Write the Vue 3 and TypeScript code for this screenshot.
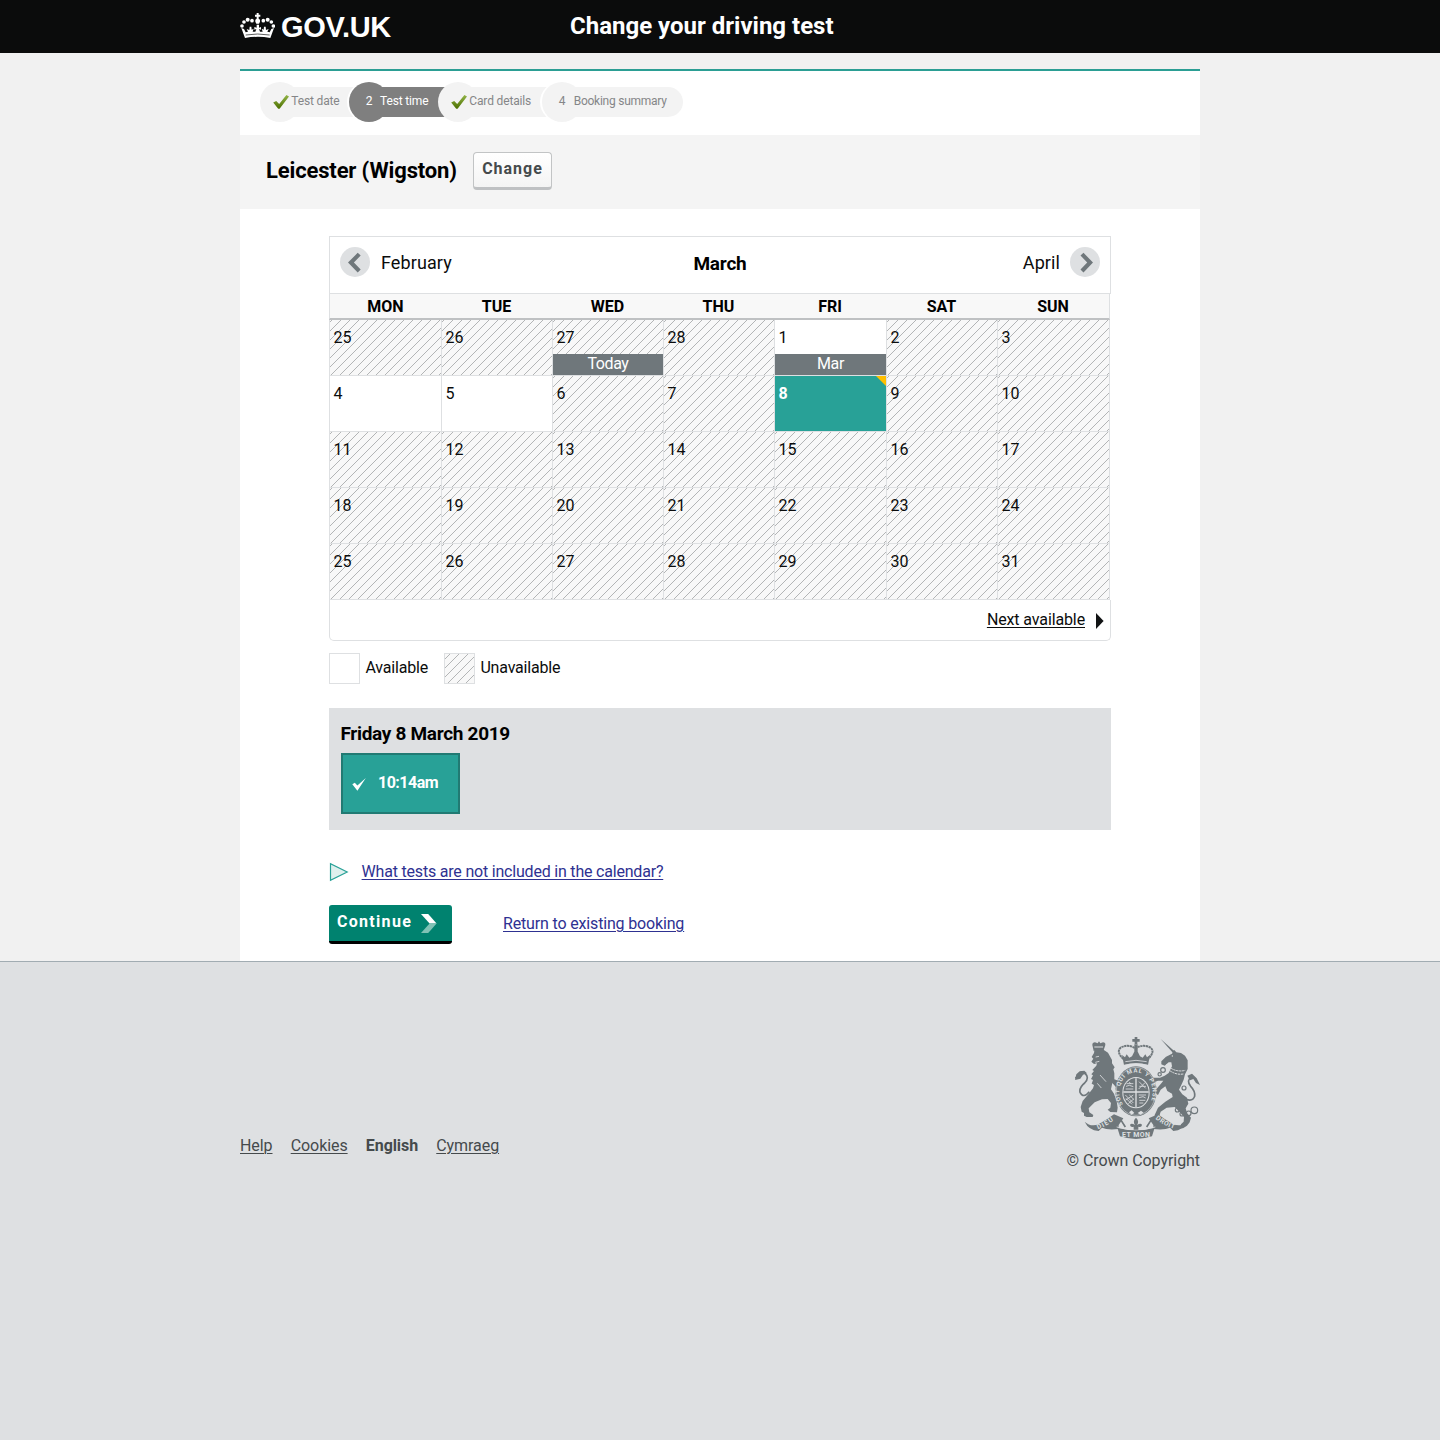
<script setup lang="ts">
interface Step {
  label: string
  state: 'done' | 'current' | 'todo'
  num?: number
  width: number
}

interface Day {
  n: number
  open?: boolean
  selected?: boolean
  note?: string
}

const steps: Step[] = [
  { label: 'Test date', state: 'done', width: 89 },
  { label: 'Test time', state: 'current', num: 2, width: 89 },
  { label: 'Card details', state: 'done', width: 104 },
  { label: 'Booking summary', state: 'todo', num: 4, width: 141 },
]

const weekdays = ['MON', 'TUE', 'WED', 'THU', 'FRI', 'SAT', 'SUN']

const days: Day[] = [
  { n: 25 },
  { n: 26 },
  { n: 27, note: 'Today' },
  { n: 28 },
  ...Array.from({ length: 31 }, (_, i): Day => {
    const n = i + 1
    return {
      n,
      open: [1, 4, 5].includes(n),
      selected: n === 8,
      note: n === 1 ? 'Mar' : undefined,
    }
  }),
]
</script>

<template>
  <div class="page">
    <header class="top">
      <div class="top-inner">
        <a class="logo">
          <svg width="35" height="26" viewBox="30 39 105 78" fill="#fff">
            <circle cx="36" cy="78" r="5.5" />
            <circle cx="42" cy="66" r="5.5" />
            <circle cx="53" cy="59" r="6" />
            <circle cx="66" cy="62" r="5.5" />
            <circle cx="130" cy="78" r="5.5" />
            <circle cx="124" cy="66" r="5.5" />
            <circle cx="113" cy="59" r="6" />
            <circle cx="100" cy="62" r="5.5" />
            <path d="M80 39h6v5h5v6h-5v6q6 2 4 9l-3 6h-8l-3-6q-2-7 4-9v-6h-5v-6h5z" />
            <path d="M34 84l8 3 5 10 7-2-4-8 8 3 1-10 5 0 1 9 6-3-3 9 8 0 3-8-6 2 0-8 7 2 0-9 7 0 0 9 6-2 0 8-6-2 3 8 8 0-3-9 6 3 1-9 5 0 1 10 8-3-4 8 7 2 5-10 8-3-11 30q-37-7-76 0z" />
            <path d="M47 105q36-6 72 0" fill="none" stroke="#0b0c0c" stroke-width="2" />
          </svg>
          <span class="logo-text">GOV.UK</span>
        </a>
        <span class="service">Change your driving test</span>
      </div>
    </header>

    <main class="content">
      <ol class="steps">
        <li v-for="s in steps" :key="s.label" class="step" :class="s.state" :style="{ width: s.width + 'px' }">
          <span class="disc">
            <svg v-if="s.state === 'done'" width="16" height="15" viewBox="0 0 16 15">
              <defs>
                <linearGradient id="tick" x1="0" y1="0" x2="0" y2="1">
                  <stop offset="0" stop-color="#93b548" />
                  <stop offset="1" stop-color="#4c7000" />
                </linearGradient>
              </defs>
              <path d="M.2 8.6 3.2 7 6.2 10 13.4 1 16 2.4 6.6 14.7 5.2 14.7z" fill="url(#tick)" />
            </svg>
            <template v-else>{{ s.num }}</template>
          </span>
          <span class="step-label">{{ s.label }}</span>
        </li>
      </ol>

      <section class="centre">
        <h1>Leicester (Wigston)</h1>
        <button class="change">Change</button>
      </section>

      <div class="booking">
        <section class="calendar">
          <div class="months">
            <a class="month-link">
              <svg width="30" height="30" viewBox="0 0 30 30">
                <circle cx="15" cy="15" r="15" fill="#dee0e2" />
                <path d="M8 15.6 17.7 5.8 20.7 8.6 13.9 15.6 20.7 22.6 17.7 25.4z" fill="#6f777b" />
              </svg>
              <span>February</span>
            </a>
            <h2>March</h2>
            <a class="month-link next">
              <span>April</span>
              <svg width="30" height="30" viewBox="0 0 30 30">
                <circle cx="15" cy="15" r="15" fill="#dee0e2" />
                <path d="M23 15.6 13.5 5.8 10.5 8.6 17.2 15.6 10.5 22.6 13.5 25.4z" fill="#6f777b" />
              </svg>
            </a>
          </div>
          <div class="grid weekdays">
            <span v-for="w in weekdays" :key="w">{{ w }}</span>
          </div>
          <div class="grid days">
            <div v-for="(d, i) in days" :key="i" class="day" :class="{ closed: !d.open && !d.selected, selected: d.selected }">
              <span class="num">{{ d.n }}</span>
              <span v-if="d.note" class="note">{{ d.note }}</span>
            </div>
          </div>
          <div class="cal-foot">
            <a>Next available</a>
            <svg width="8" height="16" viewBox="0 0 8 16"><path d="M0 0 7.6 8 0 16z" fill="#111314" /></svg>
          </div>
        </section>

        <div class="legend">
          <i class="swatch"></i><span>Available</span>
          <i class="swatch hatched"></i><span>Unavailable</span>
        </div>

        <section class="slots">
          <h3>Friday 8 March 2019</h3>
          <div class="slot">
            <svg width="14" height="13" viewBox="0 0 14 13"><path d="M.3 6.2 2.8 4.8 5.4 7.6 13.8 0 5.4 12.8z" fill="#fff" /></svg>
            <span>10:14am</span>
          </div>
        </section>

        <div class="help">
          <svg width="20" height="20" viewBox="0 0 20 20">
            <path d="M1.5 1.6v16.8L18.2 10z" fill="#dff0ee" stroke="#28a197" stroke-width="1.2" />
          </svg>
          <a>What tests are not included in the calendar?</a>
        </div>

        <div class="actions">
          <button class="go">
            <span>Continue</span>
            <svg width="16" height="19" viewBox="0 0 16 19">
              <path d="M0 0H7.2L15.6 9.4H8.6z" fill="#fff" />
              <path d="M0 19H7.2L15.6 9.4H8.6z" fill="#80c2b5" />
            </svg>
          </button>
          <a>Return to existing booking</a>
        </div>
      </div>
    </main>

    <footer class="foot">
      <div class="foot-inner">
        <nav>
          <a>Help</a>
          <a>Cookies</a>
          <strong>English</strong>
          <a>Cymraeg</a>
        </nav>
        <div class="crest">
          <svg width="125" height="103" viewBox="45 36 375 309" fill="#6f777b" font-family="Roboto, sans-serif" font-weight="700">
            <defs>
              <path id="motto" d="M189 238A50 59 0 1 1 267 238" />
              <path id="ribbonL" d="M114 313Q140 303 166 283" />
              <path id="ribbonR" d="M286 281Q312 303 346 313" />
            </defs>
            <!-- lion -->
            <path d="M97 60q0-8 8-8l8 3 4-6 4 6 8-3q8 0 7 8l-5 16q-15-4-30 2z" />
            <path d="M103 66h26" stroke="#dee0e2" stroke-width="3" />
            <path d="M102 84l-7 12 5 5-6 9 8 7 9-2-2 7-12 13 5 3-8 10 5 3-6 11 6 3-4 11 7 4-3 10-14 18-17 20-6 18 3 14 7 4 0 8 8 4 18 0 2-6-12-8-2-12 18-18 22-9 17-1 10 12-2 14-8 6 8 7 20 1 2-14-3-20-8-22-9-13 4-19 14 16 8-2 0-12-8-10-8-3 0-18-3-12 4-6-8-12 0-10-12-22-18-12-22-1z" />
            <path d="M88 200q-18 22-28 2-3-14 14-28 16-16 0-30-10-7-16 4l-12 12" fill="none" stroke="#6f777b" stroke-width="5" />
            <path d="M45 165l4-17 10-9 14-2 8 8-12 4-8 12z" />
            <path d="M107 96l10-2M106 112l12-3M112 175l12 14M120 150l18 20" stroke="#dee0e2" stroke-width="2.5" />
            <!-- unicorn -->
            <path d="M302 42l44 39-5 5z" />
            <path d="M336 86l6-12 7 8 14 2 12 8 8 14 0 26-8 16-4 16-6 14-8 16 10 14 14 10 4 18-8 14 4 14 12 14-4 14-8 10-12 8-10 0 4-12 8-8 1-14-14-16-14-14-24 2-18 12-6 20-12 0 0-10 10-22 22-18 22-14-2-10-14-8-6-14-14 10-8 16-6-3 2-16 14-16 6-8-16 0-10 4-10-4-6 4 0-7 10-6 22 0 14-6 12-8 10-20-2-12-8 0-12 10-10-4 0-9 14-14z" />
            <path d="M318 118q26 26 58 18M322 131q22 20 48 16" fill="none" stroke="#dee0e2" stroke-width="3" stroke-dasharray="7 2" />
            <circle cx="337" cy="93" r="2" fill="#dee0e2" />
            <path d="M364 216q32 20 40-2 2-16-12-30-14-18 2-28" fill="none" stroke="#6f777b" stroke-width="5" />
            <path d="M382 152l14-6 14 14 10 20-12-6-8-12-10 4z" />
            <g fill="none" stroke="#6f777b" stroke-width="3.5">
              <circle cx="309" cy="135" r="7" />
              <circle cx="299" cy="148" r="5" />
              <circle cx="372" cy="189" r="6" />
              <circle cx="352" cy="255" r="6" />
              <circle cx="366" cy="267" r="6" />
              <circle cx="386" cy="265" r="7" />
              <circle cx="403" cy="256" r="10" />
            </g>
            <!-- garter and shield -->
            <ellipse cx="228" cy="199" rx="62" ry="75" />
            <ellipse cx="228" cy="199" rx="59" ry="72" fill="none" stroke="#dee0e2" stroke-width="1.5" />
            <ellipse cx="228" cy="203" rx="41" ry="47" fill="#dee0e2" />
            <ellipse cx="228" cy="203" rx="38" ry="44" />
            <path d="M228 160v86M190 201h76" stroke="#dee0e2" stroke-width="4" />
            <g fill="none" stroke="#dee0e2" stroke-width="2.5">
              <path d="M200 176h20M198 184l10-3 12 4M197 192h23M207 172l6 4M237 170l20 20M256 172l-20 20M238 184h20" />
              <path d="M196 210l24 24M198 220l18 18M208 210l14 14M220 210l-24 16M221 222l-16 14M236 210h22M237 218l12-3 8 4M238 226h18M238 234h12" />
            </g>
            <text font-size="18" fill="#dee0e2"><textPath href="#motto" textLength="236">SOIT QUI MAL Y PENSE</textPath></text>
            <path d="M207 262l8-6 8 8-8 5zM233 264l10-7 8 6-10 6z" fill="#dee0e2" />
            <!-- crown -->
            <path d="M224 36h8v6h7v8h-7v8h-8v-8h-7v-8h7z" />
            <path d="M190 102q-22-22-8-34 22-12 44 2 24-14 46-2 14 12-8 34" fill="none" stroke="#6f777b" stroke-width="6" stroke-dasharray="7 1.5" />
            <path d="M223 58h10v40h-10z" />
            <path d="M192 120l-6-30 9 7 5-9 8 10 8-4 6-12 6-4 6 4 6 12 8 4 8-10 5 9 9-7-6 30q-36-10-72 0z" />
            <path d="M196 110q32-8 64 0M192 121q36-10 72 0" fill="none" stroke="#dee0e2" stroke-width="2.5" />
            <!-- ribbon -->
            <path d="M74 290q20 18 44 6 24-12 44-28l28 12-14 20 0 12q-34 4-50-4l-10 10q-30-2-42-28z" />
            <path d="M382 290q-20 18-44 6-24-12-44-28l-28 12 14 20 0 12q34 4 50-4l10 10q30-2 42-28z" />
            <path d="M172 308q56 16 112 0l-8 26q-48 16-96 0z" />
            <path d="M170 306q58 16 116 0" fill="none" stroke="#dee0e2" stroke-width="2.5" />
            <path d="M182 284l14 22M274 284l-14 22" stroke="#6f777b" stroke-width="5" />
            <path d="M228 278q-11 10-3 22-12-8-15 0 2 9 11 5l0 9h14l0-9q9 4 11-5-3-8-15 0 8-12-3-22z" />
            <text font-size="20" fill="#dee0e2"><textPath href="#ribbonL" textLength="54">DIEU</textPath></text>
            <text x="186" y="337" font-size="21" fill="#dee0e2" textLength="84">ET MON</text>
            <text font-size="20" fill="#dee0e2"><textPath href="#ribbonR" textLength="64">DROIT</textPath></text>
          </svg>
          <p>© Crown Copyright</p>
        </div>
      </div>
    </footer>
  </div>
</template>

<style>
body {
  background: #f1f1f1;
}
</style>

<style scoped>
.page {
  min-height: 1440px;
  display: flex;
  flex-direction: column;
  font-family: Roboto, 'Liberation Sans', sans-serif;
  font-size: 16px;
  line-height: 20px;
  color: #0b0c0c;
}
h1, h2, h3, p, ol {
  margin: 0;
  padding: 0;
}
svg {
  display: block;
  flex: none;
}
span, a, h1, h2, h3, p {
  white-space: nowrap;
}
.top {
  height: 53px;
  background: #0b0c0c;
  color: #fff;
}
.top-inner {
  width: 960px;
  margin: 0 auto;
  display: flex;
}
.logo {
  display: flex;
  width: 330px;
  padding-top: 13px;
  box-sizing: border-box;
}
.logo-text {
  font: 700 29px/30px 'Liberation Sans', sans-serif;
  letter-spacing: -0.3px;
  margin: -1px 0 0 6px;
}
.service {
  font-size: 24px;
  font-weight: 700;
  line-height: 30px;
  margin-top: 11px;
}
.content {
  width: 960px;
  height: 890px;
  margin: 16px auto 0;
  border-top: 2px solid #2b9e94;
  background: #fff;
}
.steps {
  display: flex;
  list-style: none;
  height: 53px;
  padding: 11px 0 0 20px;
}
.step {
  position: relative;
  display: flex;
  height: 40px;
  font-size: 12px;
  line-height: 38px;
  letter-spacing: -0.15px;
  color: #858688;
}
.step::before {
  content: '';
  position: absolute;
  left: 20px;
  right: -10px;
  top: 5px;
  height: 30px;
  background: #f3f3f3;
}
.step:last-child::before {
  right: 0;
  border-radius: 0 15px 15px 0;
}
.disc {
  position: relative;
  width: 40px;
  height: 40px;
  flex: none;
  border-radius: 50%;
  background: #f3f3f3;
  text-align: center;
}
.current .disc, .todo .disc {
  box-shadow: -2px 0 0 #fff;
}
.disc svg {
  margin: 12px 0 0 13px;
}
.step-label {
  position: relative;
  margin-left: -9px;
}
.done .step-label {
  margin-left: -8.7px;
}
.todo .step-label {
  margin-left: -8.3px;
  letter-spacing: -0.25px;
}
.current {
  color: #fff;
}
.current::before, .current .disc {
  background: #7f7f7f;
}
.centre {
  height: 74px;
  box-sizing: border-box;
  padding: 17px 0 0 26px;
  display: flex;
  align-items: flex-start;
  background: #f4f4f4;
}
h1 {
  width: 207px;
  font-size: 22px;
  line-height: 38px;
  letter-spacing: -0.15px;
  color: #000;
}
.change {
  width: 79px;
  height: 38px;
  box-sizing: border-box;
  padding: 0 0 2px 0;
  border: 1px solid #c2c4c5;
  border-bottom: 3px solid #bfc1c3;
  border-radius: 4px;
  background: linear-gradient(#fff, #f4f4f4);
  font: 700 16px/32px Roboto, sans-serif;
  letter-spacing: 1px;
  color: #454a4c;
}
.booking {
  width: 782px;
  margin: 27px 0 0 89px;
}
.months {
  display: grid;
  grid-template-columns: 1fr auto 1fr;
  height: 58px;
  box-sizing: border-box;
  padding: 10px 10px 0;
  border: 1px solid #dee0e2;
  font-size: 18px;
  line-height: 32px;
}
.month-link {
  display: flex;
  gap: 11px;
  letter-spacing: 0.1px;
}
.next {
  justify-content: flex-end;
  gap: 10px;
}
h2 {
  font-size: 19px;
  line-height: 33px;
  letter-spacing: -0.2px;
  color: #000;
}
.grid {
  width: 780px;
  display: grid;
  grid-template-columns: 112px 111px 111px 111px 112px 111px 112px;
  border-left: 1px solid #dee0e2;
}
.weekdays {
  height: 24px;
  background: #f8f8f8;
  border-bottom: 2px solid #bfc1c3;
  border-right: 1px solid #dee0e2;
  width: 779px;
  grid-template-columns: 111px 111px 111px 111px 112px 111px 112px;
  font-weight: 700;
  line-height: 25px;
  text-align: center;
  color: #000;
}
.day {
  position: relative;
  height: 55px;
  border-right: 1px solid #dee0e2;
  border-bottom: 1px solid #dee0e2;
  background-color: #fff;
}
.closed, .hatched {
  background: #f8f8f8 url("data:image/svg+xml,%3Csvg xmlns='http://www.w3.org/2000/svg' width='9' height='9' fill='%23b3b5b6' shape-rendering='crispEdges'%3E%3Cpath d='M8 0h1v1h-1zM7 1h1v1h-1zM6 2h1v1h-1zM5 3h1v1h-1zM4 4h1v1h-1zM3 5h1v1h-1zM2 6h1v1h-1zM1 7h1v1h-1zM0 8h1v1h-1z'/%3E%3C/svg%3E") 2px 0;
}
.hatched {
  background-position: 5px 0;
}
.num {
  display: block;
  padding: 8px 0 0 3.6px;
}
.note {
  position: absolute;
  left: 0;
  right: 0;
  bottom: 0;
  height: 21px;
  line-height: 20px;
  text-align: center;
  letter-spacing: -0.4px;
  background: #6f777b;
  color: #fff;
}
.selected {
  background: #28a197;
  color: #fff;
  font-weight: 700;
}
.selected::after {
  content: '';
  position: absolute;
  top: 0;
  right: 0;
  border-top: 10px solid #ffbf00;
  border-left: 10px solid transparent;
}
.cal-foot {
  height: 40px;
  display: flex;
  justify-content: flex-end;
  align-items: center;
  gap: 11px;
  padding-right: 6px;
  border: 1px solid #dee0e2;
  border-top: 0;
  border-radius: 0 0 5px 5px;
}
.cal-foot svg {
  margin-top: 1px;
}
.cal-foot a, .help a, .actions a, nav a {
  text-decoration: underline;
  text-decoration-thickness: 1px;
  text-underline-offset: 2px;
}
.cal-foot a {
  letter-spacing: -0.12px;
}
.legend {
  display: flex;
  height: 31px;
  margin-top: 12px;
  line-height: 29px;
  letter-spacing: -0.2px;
}
.swatch {
  width: 29px;
  height: 29px;
  margin-right: 5.5px;
  border: 1px solid #dee0e2;
}
.legend .hatched {
  margin-left: 16px;
}
.slots {
  height: 122px;
  box-sizing: border-box;
  margin-top: 24px;
  padding: 15px 0 0 12px;
  background: #dee0e2;
}
h3 {
  font-size: 19px;
  line-height: 21px;
  letter-spacing: -0.3px;
  margin-left: -0.6px;
  color: #000;
}
.slot {
  display: flex;
  width: 119px;
  height: 61px;
  box-sizing: border-box;
  margin-top: 9px;
  padding-left: 9px;
  gap: 12px;
  border: 2px solid #217a73;
  background: #28a197;
  color: #fff;
  font-weight: 700;
  line-height: 55px;
  letter-spacing: -0.5px;
}
.slot svg {
  margin-top: 23px;
}
.help {
  display: flex;
  gap: 12.6px;
  margin-top: 32px;
  color: #2e3191;
}
.help a {
  letter-spacing: -0.2px;
  line-height: 20px;
}
.actions {
  display: flex;
  margin-top: 23px;
  color: #2e3191;
}
.actions a {
  margin: 9px 0 0 51px;
  letter-spacing: -0.16px;
}
.go {
  display: flex;
  width: 123px;
  height: 39px;
  box-sizing: border-box;
  padding: 0 0 0 8px;
  border: 0;
  border-bottom: 3px solid #000;
  border-radius: 3px;
  background: #00826f;
  color: #fff;
  font: 700 16px/33px Roboto, sans-serif;
  letter-spacing: 1.3px;
}
.go svg {
  margin: 9px 0 0 9px;
}
.foot {
  flex: 1;
  border-top: 1px solid #a1acb2;
  background: #dee0e2;
  color: #454a4c;
}
.foot-inner {
  width: 960px;
  margin: 0 auto;
  padding-top: 75px;
  display: flex;
  justify-content: space-between;
}
nav {
  display: flex;
  gap: 18.2px;
  padding-top: 99px;
  letter-spacing: -0.07px;
}
.crest {
  display: flex;
  flex-direction: column;
  align-items: flex-end;
}
.crest p {
  margin-top: 11px;
  letter-spacing: -0.06px;
}
</style>
